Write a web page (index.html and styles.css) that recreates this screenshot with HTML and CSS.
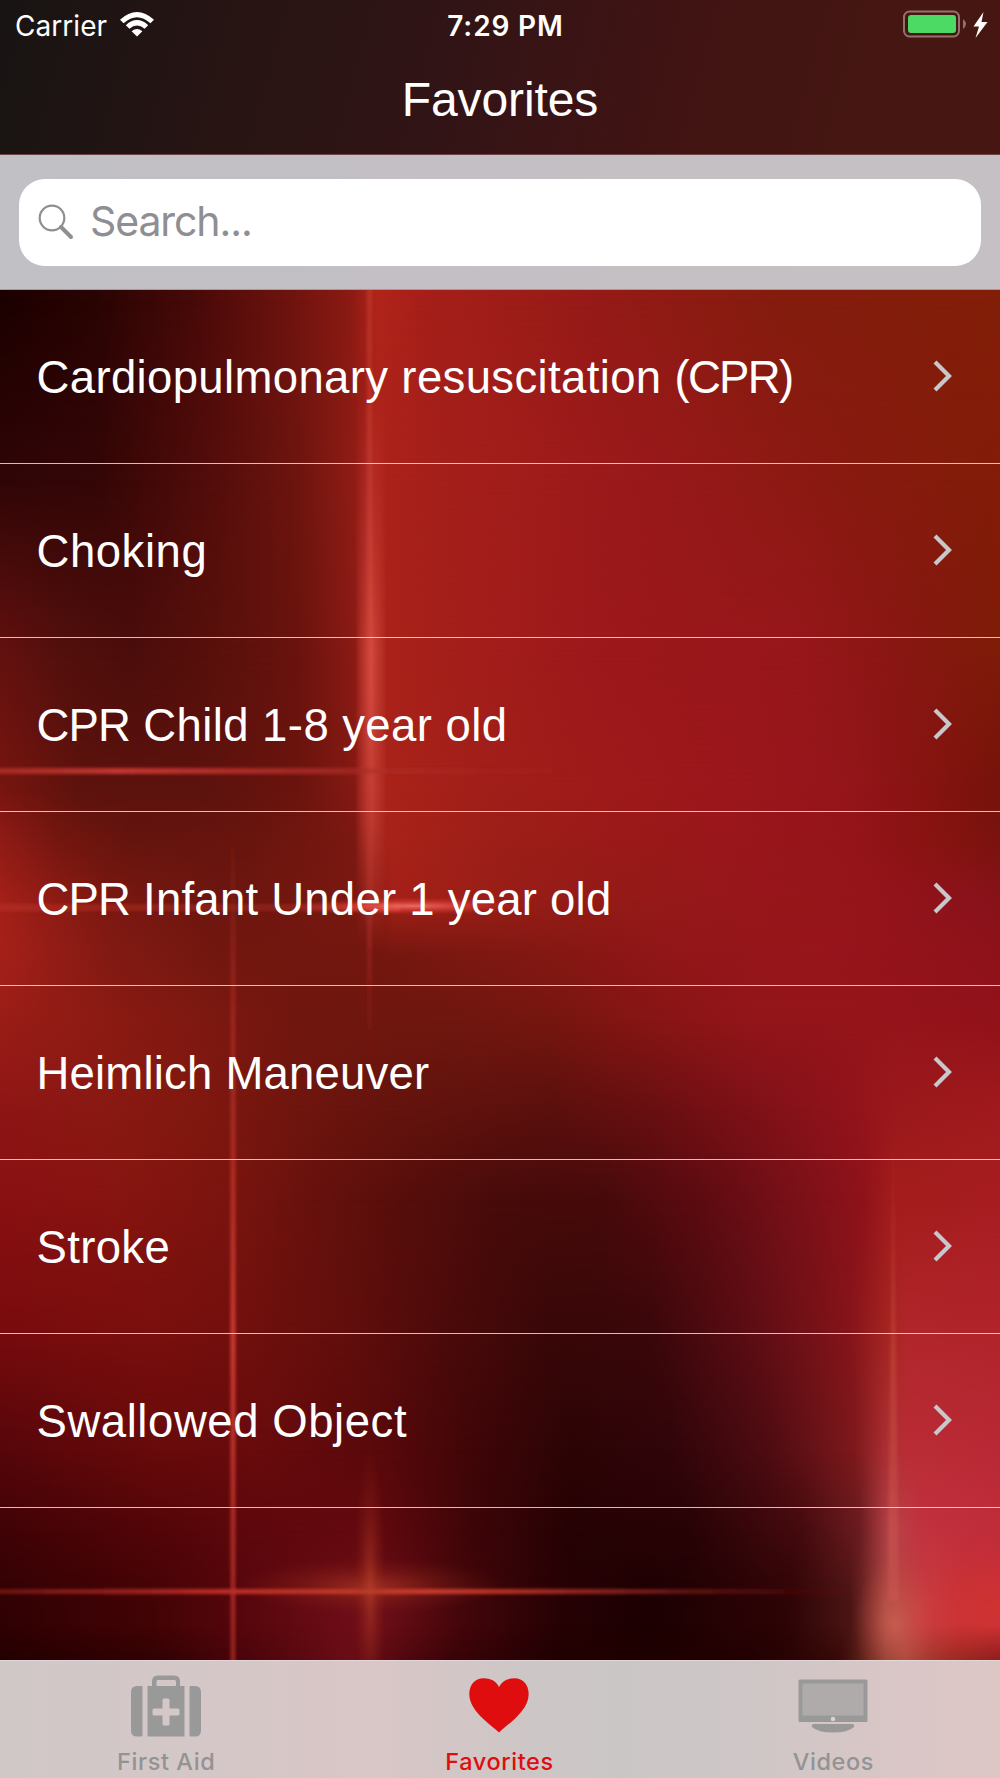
FILE: index.html
```html
<!DOCTYPE html>
<html lang="en">
<head>
<meta charset="utf-8">
<title>Favorites</title>
<link rel="stylesheet" href="styles.css">
</head>
<body>
<div class="screen">
  <div class="wallpaper" aria-hidden="true">
    <div class="band b1"></div>
    <div class="band b2"></div>
    <div class="band b3"></div>
    <div class="band b4"></div>
    <div class="band b5"></div>
    <div class="band b6"></div>
    <div class="band b7"></div>
    <div class="band b8"></div>
    <div class="band b9"></div>
    <div class="band b10"></div>
    <div class="band b11"></div>
    <div class="band b12"></div>
    <div class="band b13"></div>
    <div class="band b14"></div>
    <div class="band b15"></div>
    <svg class="lights" viewBox="0 0 1000 1778">
      <defs>
        <linearGradient id="beam"><stop offset="0" stop-color="#d8483e" stop-opacity="0"/><stop offset=".25" stop-color="#cf453b" stop-opacity=".6"/><stop offset=".5" stop-color="#e2554a" stop-opacity=".8"/><stop offset=".75" stop-color="#cf453b" stop-opacity=".6"/><stop offset="1" stop-color="#d8483e" stop-opacity="0"/></linearGradient>
        <linearGradient id="fade" gradientUnits="userSpaceOnUse" x1="0" y1="380" x2="0" y2="950"><stop offset="0" stop-color="#fff" stop-opacity="0"/><stop offset=".3" stop-color="#fff" stop-opacity=".6"/><stop offset=".48" stop-color="#fff"/><stop offset=".75" stop-color="#fff" stop-opacity=".75"/><stop offset="1" stop-color="#fff" stop-opacity="0"/></linearGradient>
        <mask id="beammask" maskUnits="userSpaceOnUse" x="340" y="380" width="60" height="570"><rect x="340" y="380" width="60" height="570" fill="url(#fade)"/></mask>
        <radialGradient id="spark"><stop offset="0" stop-color="#f4766c" stop-opacity=".9"/><stop offset=".5" stop-color="#e8453f" stop-opacity=".5"/><stop offset="1" stop-color="#c82a24" stop-opacity="0"/></radialGradient>
        <radialGradient id="amber"><stop offset="0" stop-color="#b8402a" stop-opacity=".6"/><stop offset=".5" stop-color="#a8351f" stop-opacity=".25"/><stop offset="1" stop-color="#902818" stop-opacity="0"/></radialGradient>
        <radialGradient id="star"><stop offset="0" stop-color="#dc7460" stop-opacity=".5"/><stop offset="1" stop-color="#c85040" stop-opacity="0"/></radialGradient>
        <linearGradient id="v1" gradientUnits="userSpaceOnUse" x1="0" y1="290" x2="0" y2="1065"><stop offset="0" stop-color="#c23a2e" stop-opacity=".6"/><stop offset=".5" stop-color="#d8483e" stop-opacity=".3"/><stop offset=".8" stop-color="#a82a24" stop-opacity=".7"/><stop offset="1" stop-color="#901818" stop-opacity="0"/></linearGradient>
        <linearGradient id="v2" gradientUnits="userSpaceOnUse" x1="0" y1="820" x2="0" y2="1660"><stop offset="0" stop-color="#a02820" stop-opacity="0"/><stop offset=".25" stop-color="#a82a22" stop-opacity=".7"/><stop offset=".62" stop-color="#c8382e"/><stop offset="1" stop-color="#a02420" stop-opacity=".85"/></linearGradient>
        <linearGradient id="v3" gradientUnits="userSpaceOnUse" x1="0" y1="1110" x2="0" y2="1600"><stop offset="0" stop-color="#c04038" stop-opacity="0"/><stop offset=".5" stop-color="#c24838" stop-opacity=".6"/><stop offset="1" stop-color="#d86058" stop-opacity=".3"/></linearGradient>
        <linearGradient id="h1" gradientUnits="userSpaceOnUse" x1="0" y1="0" x2="600" y2="0"><stop offset="0" stop-color="#b03028" stop-opacity=".8"/><stop offset=".2" stop-color="#c2342e"/><stop offset=".55" stop-color="#a82a24" stop-opacity=".8"/><stop offset=".7" stop-color="#b03028" stop-opacity=".35"/><stop offset="1" stop-color="#a82020" stop-opacity="0"/></linearGradient>
        <linearGradient id="h2" gradientUnits="userSpaceOnUse" x1="0" y1="0" x2="400" y2="0"><stop offset="0" stop-color="#c03028" stop-opacity=".5"/><stop offset=".7" stop-color="#a02820" stop-opacity=".5"/><stop offset="1" stop-color="#e05048" stop-opacity=".7"/></linearGradient>
        <linearGradient id="h3" gradientUnits="userSpaceOnUse" x1="0" y1="0" x2="860" y2="0"><stop offset="0" stop-color="#901c18" stop-opacity=".6"/><stop offset=".25" stop-color="#b82c24"/><stop offset=".5" stop-color="#d43c30"/><stop offset=".7" stop-color="#a02820" stop-opacity=".8"/><stop offset="1" stop-color="#701010" stop-opacity="0"/></linearGradient>
        <filter id="soft" filterUnits="userSpaceOnUse" x="-20" y="270" width="1040" height="1400"><feGaussianBlur stdDeviation="1.5"/></filter>
      </defs>
      <rect x="355" y="380" width="32" height="570" fill="url(#beam)" mask="url(#beammask)"/>
      <g filter="url(#soft)">
        <rect x="367" y="280" width="5" height="785" fill="url(#v1)"/>
        <rect x="230.500" y="820" width="5" height="850" fill="url(#v2)"/>
        <path d="M893 1110L899 1600H888Z" fill="url(#v3)"/>
        <rect x="-10" y="768" width="610" height="6" fill="url(#h1)"/>
        <rect x="-10" y="904" width="410" height="7" fill="url(#h2)"/>
        <rect x="-10" y="1589" width="870" height="5" fill="url(#h3)"/>
      </g>
      <ellipse cx="413" cy="906" rx="115" ry="9" fill="url(#spark)"/>
      <ellipse cx="370" cy="1586" rx="135" ry="28" fill="url(#amber)"/>
      <ellipse cx="370" cy="1586" rx="16" ry="140" fill="url(#amber)"/>
      <ellipse cx="895" cy="1625" rx="40" ry="70" fill="url(#star)"/>
    </svg>
  </div>

  <header class="header">
    <div class="status">
      <div class="status-left">
        <span class="carrier">Carrier</span>
        <svg class="wifi" viewBox="0 0 34 25"><path d="M0 7.700Q17-7.700 34 7.700L30.400 11.300Q17-.700 3.600 11.300Z"/><path d="M5.800 13.200Q17 3 28.200 13.200L24.600 16.800Q17 10.200 9.400 16.800Z"/><path d="M11.600 19.200Q17 14.600 22.400 19.200L17 24.500Z"/></svg>
      </div>
      <span class="time">7:29 PM</span>
      <div class="status-right">
        <svg class="battery" viewBox="0 0 86 28"><rect x="1" y="1.500" width="55" height="25" rx="5.500" fill="none" stroke="#94706f" stroke-width="2"/><rect x="5" y="5" width="48" height="18" rx="3" fill="#4cd964"/><path d="M60 9Q66 14 60 19Z" fill="#94706f"/><path d="M80.500 2L70.500 16.500H76L72.500 28L84.500 12H78.500Z" fill="#fff"/></svg>
      </div>
    </div>
    <h1 class="title">Favorites</h1>
  </header>

  <div class="searchbar">
    <div class="searchbox">
      <svg class="lens" viewBox="0 0 36 36"><circle cx="14" cy="14" r="12.300" fill="none" stroke="#8e8e93" stroke-width="2.200"/><path d="M23 23L33 33" stroke="#8e8e93" stroke-width="4" stroke-linecap="round"/></svg>
      <span class="placeholder">Search...</span>
    </div>
  </div>

  <ul class="list">
    <li class="row"><span class="name cardio">Cardiopulmonary resuscitation <span class="paren">(CPR)</span></span><svg class="chevron" viewBox="0 0 20 32"><path d="M2 2L16 16L2 30"/></svg></li>
    <li class="row"><span class="name choking">Choking</span><svg class="chevron" viewBox="0 0 20 32"><path d="M2 2L16 16L2 30"/></svg></li>
    <li class="row"><span class="name child"><span class="caps">CPR</span> Child 1-8 year old</span><svg class="chevron" viewBox="0 0 20 32"><path d="M2 2L16 16L2 30"/></svg></li>
    <li class="row"><span class="name infant"><span class="caps">CPR</span> Infant Under 1 year old</span><svg class="chevron" viewBox="0 0 20 32"><path d="M2 2L16 16L2 30"/></svg></li>
    <li class="row"><span class="name heimlich">Heimlich Maneuver</span><svg class="chevron" viewBox="0 0 20 32"><path d="M2 2L16 16L2 30"/></svg></li>
    <li class="row"><span class="name stroke">Stroke</span><svg class="chevron" viewBox="0 0 20 32"><path d="M2 2L16 16L2 30"/></svg></li>
    <li class="row"><span class="name swallowed">Swallowed Object</span><svg class="chevron" viewBox="0 0 20 32"><path d="M2 2L16 16L2 30"/></svg></li>
  </ul>

  <nav class="tabs">
    <div class="tab">
      <svg class="icon" viewBox="0 0 72 64"><path fill="#999" fill-rule="evenodd" d="M7 12H11.500Q12.500 12 12.500 13V61.500Q12.500 62.500 11.500 62.500H7Q1 62.500 1 56.500V18Q1 12 7 12ZM60.500 12H65Q71 12 71 18V56.500Q71 62.500 65 62.500H60.500Q59.500 62.500 59.500 61.500V13Q59.500 12 60.500 12ZM17.500 12H22V7.500Q22 1.500 28 1.500H44Q50 1.500 50 7.500V12H54.500V62.500H17.500ZM26.500 12H46V7.500Q46 6 44.500 6H28Q26.500 6 26.500 7.500ZM34 24.500Q32.500 24.500 32.500 26V34.500H24Q22.500 34.500 22.500 36V40Q22.500 41.500 24 41.500H32.500V50Q32.500 51.500 34 51.500H38Q39.500 51.500 39.500 50V41.500H48Q49.500 41.500 49.500 40V36Q49.500 34.500 48 34.500H39.500V26Q39.500 24.500 38 24.500Z"/></svg>
      <span class="label">First Aid</span>
    </div>
    <div class="tab active">
      <svg class="icon" viewBox="0 0 72 64"><path fill="#df0d0d" d="M36 58.500C27 50 6.300 37 6.300 20C6.300 10 13 4.300 20.500 4.300C27.500 4.300 33 7 36 13C39 7 44.500 4.300 51.500 4.300C59 4.300 65.700 10 65.700 20C65.700 37 45 50 36 58.500Z"/></svg>
      <span class="label">Favorites</span>
    </div>
    <div class="tab">
      <svg class="icon" viewBox="0 0 72 64"><rect x="1.500" y="5.500" width="69" height="42.500" rx="1.500" fill="#999"/><rect x="5.500" y="9.500" width="61" height="32" fill="#afabab"/><circle cx="36" cy="45" r="2.300" fill="#dcd0d0"/><path d="M16 50H56Q58 51 57 53Q51 58.500 36 58.500Q21 58.500 15 53Q14 51 16 50Z" fill="#999"/></svg>
      <span class="label">Videos</span>
    </div>
  </nav>
</div>
</body>
</html>
```
FILE: styles.css
```css
* { box-sizing: border-box; margin: 0; padding: 0; }
body { background: #200001; font-family: "Liberation Sans", Arial, sans-serif; }
.screen { position: relative; width: 1000px; height: 1778px; display: flex; flex-direction: column; overflow: hidden; }
svg { display: block; flex: none; }

/* Wallpaper: every band fades in over the one before it */
.wallpaper { position: absolute; inset: 0; display: grid; z-index: -1; }
.band, .lights { grid-area: 1 / 1; }
.lights { width: 1000px; height: 1778px; z-index: 1; }
.b1 { background: linear-gradient(90deg, #1c0000 0, #2a0403 100px, #4a0a09 200px, #73140f 300px, #8a1a13 350px, #b0241a 377px, #a61f19 420px, #951a17 600px, #841c0e 780px, #821e08 1000px); }
.b2 { background: linear-gradient(90deg, #300506 0, #340606 100px, #500c0a 200px, #6e150f 300px, #8e1c15 352px, #ab221a 380px, #a41f1a 450px, #99181a 650px, #881a10 850px, #821d08 1000px); mask-image: linear-gradient(transparent 300px, #000 480px); }
.b3 { background: linear-gradient(90deg, #64110f 0, #54100d 60px, #4b0d0b 130px, #5d110c 240px, #6b130e 300px, #8a1a14 354px, #aa2219 385px, #a41f1a 450px, #9c181b 600px, #97161a 800px, #861711 920px, #7e1b08 1000px); mask-image: linear-gradient(transparent 480px, #000 655px); }
.b4 { background: linear-gradient(90deg, #78150f 0, #5d120d 80px, #5c120d 200px, #6b140e 300px, #841913 354px, #a92319 385px, #a01e19 500px, #9c171b 700px, #94151a 850px, #861310 930px, #76130b 1000px); mask-image: linear-gradient(transparent 655px, #000 790px); }
.b5 { background: linear-gradient(90deg, #901b16 0, #74160f 60px, #65140e 130px, #68150e 250px, #7a1811 354px, #a82319 388px, #9c1e18 500px, #9a171a 700px, #95141a 850px, #85130f 950px, #7a130f 1000px); mask-image: linear-gradient(transparent 790px, #000 840px); }
.b6 { background: linear-gradient(90deg, #a32019 0, #8c1b14 60px, #7a1811 110px, #6b160f 220px, #7a1811 360px, #a42018 395px, #9a1e17 480px, #931b17 600px, #97161a 750px, #95141b 880px, #87121a 1000px); mask-image: linear-gradient(transparent 840px, #000 900px); }
.b7 { background: linear-gradient(90deg, #a52019 0, #951d17 50px, #821a13 110px, #72170f 220px, #73170f 380px, #7c1811 470px, #861713 570px, #921618 670px, #97151b 820px, #8f121a 1000px); mask-image: linear-gradient(transparent 900px, #000 955px); }
.b8 { background: linear-gradient(90deg, #9a1d17 0, #8c1b13 100px, #7e1811 200px, #70170f 300px, #6f170f 450px, #76160f 550px, #871515 650px, #93151a 750px, #95141b 900px, #92121a 1000px); mask-image: linear-gradient(transparent 955px, #000 1020px); }
.b9 { background: linear-gradient(90deg, #8e1515 0, #8a1913 100px, #80180f 200px, #6e150e 300px, #64130d 400px, #5a100d 550px, #680f11 650px, #7f1118 760px, #92131b 850px, #9b191b 900px, #a01a1c 1000px); mask-image: linear-gradient(transparent 1020px, #000 1110px); }
.b10 { background: linear-gradient(90deg, #8a1012 0, #861410 120px, #7c140f 220px, #66110d 320px, #570e0b 400px, #470b0a 500px, #460a0b 600px, #5c0b11 700px, #781018 790px, #8f121a 865px, #a41d1c 893px, #a81d21 1000px); mask-image: linear-gradient(transparent 1110px, #000 1200px); }
.b11 { background: linear-gradient(90deg, #780b0d 0, #7a0f0e 150px, #70100d 250px, #600e0c 350px, #4b0a0a 450px, #390708 550px, #3a070a 650px, #5c0d14 750px, #85141a 850px, #a32320 885px, #b0262a 905px, #b0242a 1000px); mask-image: linear-gradient(transparent 1200px, #000 1330px); }
.b12 { background: linear-gradient(90deg, #56060a 0, #680a0b 150px, #680b0d 260px, #5b090b 370px, #400608 470px, #2c0405 570px, #30050a 670px, #4e0c12 770px, #7d191c 855px, #ad3034 888px, #ba2c35 910px, #b92936 1000px); mask-image: linear-gradient(transparent 1330px, #000 1450px); }
.b13 { background: linear-gradient(90deg, #400306 0, #520508 150px, #5e080d 260px, #64090f 370px, #3e0508 470px, #260204 570px, #280306 690px, #440a0e 800px, #6a1c20 860px, #b8444a 890px, #c0333f 920px, #c02c3a 1000px); mask-image: linear-gradient(transparent 1450px, #000 1530px); }
.b14 { background: linear-gradient(90deg, #300103 0, #420305 150px, #5a070e 260px, #720e18 370px, #44060a 460px, #260104 560px, #1c0002 650px, #2e0406 790px, #4a1413 850px, #a84640 886px, #c83e42 920px, #cc3234 960px, #cf3232 1000px); mask-image: linear-gradient(transparent 1530px, #000 1605px); }
.b15 { background: linear-gradient(90deg, #200000 0, #2c0102 150px, #48050a 250px, #680d16 350px, #380307 450px, #200002 550px, #200001 750px, #340805 840px, #843a2c 885px, #a04838 905px, #962a1f 950px, #801818 1000px); mask-image: linear-gradient(transparent 1625px, #000 1668px); }

.header { height: 155px; border-bottom: 1px solid #6d4345; color: #fff; background: linear-gradient(105deg, #181413 0, #261413 22%, #321416 45%, #401313 65%, #461712 88%, #461712 100%); }
.status { height: 50px; display: grid; grid-template-columns: 1fr auto 1fr; align-items: center; padding: 0 11px 0 15px; font-family: Inter, sans-serif; font-size: 28px; }
.status-left { display: flex; align-items: center; gap: 13px; }
.carrier { letter-spacing: .05px; padding-top: 1px; }
.wifi { width: 34px; height: 25px; fill: #fff; margin-top: -2px; }
.time { font-weight: 600; letter-spacing: .85px; padding: 1px 0 0 7px; }
.status-right { display: flex; justify-content: flex-end; }
.battery { width: 86px; height: 28px; margin-top: -2px; }
.title { font-size: 48px; font-weight: 400; line-height: 100px; text-align: center; letter-spacing: -.1px; }

.searchbar { height: 135px; padding: 24px 19px 24px 19px; border-bottom: 1px solid #a8989a; background: linear-gradient(90deg, #c0c0c5, #c4bfc4 50%, #c5c0c3); }
.searchbox { height: 87px; border-radius: 26px; background: #fff; display: flex; align-items: center; padding-left: 19px; gap: 16px; }
.lens { width: 36px; height: 36px; margin-top: -1px; }
.placeholder { color: #8e8e93; font-family: Inter, sans-serif; font-size: 41px; letter-spacing: -1.1px; margin-top: -4px; }

.list { list-style: none; flex: 1; }
.row { height: 174px; display: flex; align-items: center; justify-content: space-between; padding: 0 47px 0 36.500px; border-bottom: 1px solid rgba(255, 235, 230, .8); color: #fff; font-size: 45.500px; }
.name { padding-top: 2px; }
.cardio { letter-spacing: .36px; }
.paren { letter-spacing: -1.7px; }
.caps { letter-spacing: -.8px; }
.choking { letter-spacing: .55px; }
.child { letter-spacing: .42px; }
.infant { letter-spacing: .24px; }
.heimlich { letter-spacing: .2px; }
.stroke { letter-spacing: .35px; }
.swallowed { letter-spacing: .56px; }
.chevron { width: 20px; height: 32px; margin: -2px .5px 0 0; fill: none; stroke: #c7c7cc; stroke-width: 4.200; }

.tabs { height: 118px; display: grid; grid-template-columns: repeat(3, 333.333px); border-top: 1px solid #e2d6d8; background: linear-gradient(90deg, #d0c8c7 0, #d6c7c7 25%, #dac6c6 38%, #cec6c6 52%, #cbc6c6 62%, #cfc6c6 75%, #dac6c6 90%, #dec6c6 100%); }
.tab { display: flex; flex-direction: column; align-items: center; padding: 13px 1px 0 0; color: #939393; font-family: Inter, sans-serif; font-size: 23.500px; font-weight: 500; }
.tab:last-child { padding-right: 0; }
.tab.active { color: #df0d0d; }
.icon { width: 72px; height: 64px; }
.label { line-height: 30px; margin-top: 9px; letter-spacing: .6px; }
```
